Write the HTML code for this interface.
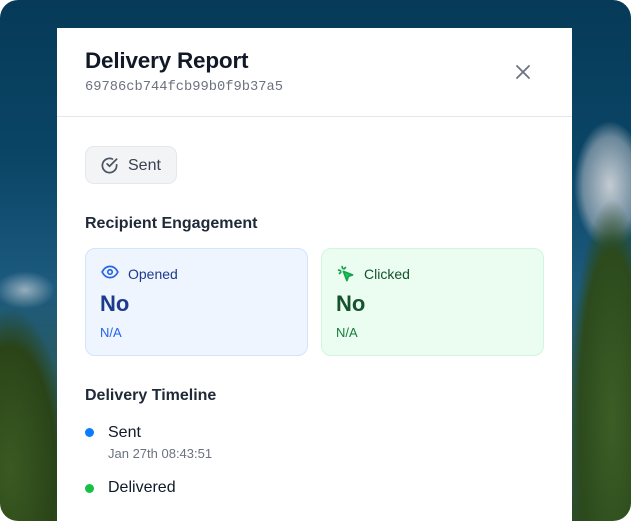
<!DOCTYPE html>
<html><head><meta charset="utf-8"><style>
*{margin:0;padding:0;box-sizing:border-box}
html,body{width:631px;height:521px;overflow:hidden;background:#fff}
.bg{position:absolute;left:0;top:0;width:631px;height:521px;border-radius:18px;overflow:hidden;
background:
radial-gradient(ellipse 50px 260px at 612px 420px,#3c5e26 0%,#2c4a1c 65%,transparent 85%),
radial-gradient(ellipse 70px 190px at 10px 470px,#3a5a22 0%,#2a4418 65%,transparent 85%),
radial-gradient(ellipse 45px 80px at 610px 185px,rgba(205,210,215,.95),rgba(170,180,190,.6) 60%,transparent 80%),
radial-gradient(ellipse 40px 25px at 25px 290px,rgba(180,195,205,.8),transparent 75%),
linear-gradient(180deg,#063a58 0%,#0a4566 30%,#1c5a7e 55%,#2a5a5a 75%,#2c4a26 100%);}
.modal{position:absolute;left:57px;top:28px;width:515px;height:493px;background:#fff;font-family:"Liberation Sans",sans-serif;color:#111827}
.hdr{height:89px;border-bottom:1px solid #e5e7eb;position:relative}
h1{position:absolute;left:28px;top:20px;font-size:22.5px;font-weight:700;color:#111827;letter-spacing:-.2px}
.id{position:absolute;left:28px;top:52px;font-family:"Liberation Mono",monospace;font-size:13.75px;color:#6b7280}
.x{position:absolute;left:457px;top:35px}
.chip{position:absolute;left:28px;top:118px;width:92px;height:38px;border:1px solid #e5e7eb;background:#f3f4f6;border-radius:9px;font-size:16px;color:#374151}
.chip svg{position:absolute;left:14px;top:9px}
.chip span{position:absolute;left:42px;top:10px}
.sec{position:absolute;left:28px;font-size:16px;font-weight:700;color:#1f2937}
.card{position:absolute;top:220px;width:223px;height:108px;border-radius:10px}
.c1{left:28px;background:#eef5ff;border:1px solid #d3e4fd}
.c2{left:264px;background:#ebfcf1;border:1px solid #d2f5df}
.card .lbl{position:absolute;left:42px;top:17px;font-size:14px}
.card svg{position:absolute;left:15px;top:16px}
.card .big{position:absolute;left:14px;top:42px;font-size:22px;font-weight:700}
.card .na{position:absolute;left:14px;top:76px;font-size:13px}
.c1 .lbl{color:#1e3a8a}.c1 .big{color:#1e3a8a}.c1 .na{color:#2563eb}
.c2 .lbl{color:#14532d}.c2 .big{color:#14532d}.c2 .na{color:#15803d}
.dot{position:absolute;left:28px;width:9px;height:9px;border-radius:50%}
.ti{position:absolute;left:51px;font-size:16px;color:#111827}
.ts{position:absolute;left:51px;font-size:13px;color:#6b7280}
</style></head><body>
<div class="bg"></div>
<div class="modal">
 <div class="hdr">
  <h1>Delivery Report</h1>
  <div class="id">69786cb744fcb99b0f9b37a5</div>
  <svg class="x" width="18" height="18" viewBox="0 0 18 18"><path d="M3 3L15 15M15 3L3 15" stroke="#6b7280" stroke-width="1.8" stroke-linecap="round"/></svg>
 </div>
 <div class="chip"><svg width="19" height="19" viewBox="0 0 24 24" fill="none" stroke="#4b5563" stroke-width="2.2" stroke-linecap="round" stroke-linejoin="round"><path d="M21 11.1V12a9 9 0 1 1-5.3-8.2"/><path d="M21 4L12 13l-3-3"/></svg><span>Sent</span></div>
 <div class="sec" style="top:187px">Recipient Engagement</div>
 <div class="card c1"><svg width="18" height="14" viewBox="0 0 24 18" fill="none" stroke="#2563eb" stroke-width="2.2"><path d="M1.5 9C4 4 7.5 1.5 12 1.5S20 4 22.5 9C20 14 16.5 16.5 12 16.5S4 14 1.5 9z"/><circle cx="12" cy="9" r="3"/></svg><div class="lbl">Opened</div><div class="big">No</div><div class="na">N/A</div></div>
 <div class="card c2"><svg width="17" height="17" viewBox="0 0 24 24" fill="none" stroke="#16a34a" stroke-width="2.4" stroke-linecap="round" stroke-linejoin="round"><path d="M9 9l5 13 2-6 6-2z" fill="#22c55e"/><path d="M7.2 2.2L8 5M2.2 7.2L5 8M12 3.5L10 5.5M3.5 12L5.5 10"/></svg><div class="lbl">Clicked</div><div class="big">No</div><div class="na">N/A</div></div>
 <div class="sec" style="top:359px">Delivery Timeline</div>
 <div class="dot" style="top:400px;background:#0a7cff"></div>
 <div class="ti" style="top:396px">Sent</div>
 <div class="ts" style="top:418px">Jan 27th 08:43:51</div>
 <div class="dot" style="top:456px;background:#16c043"></div>
 <div class="ti" style="top:451px">Delivered</div>
</div>
</body></html>
